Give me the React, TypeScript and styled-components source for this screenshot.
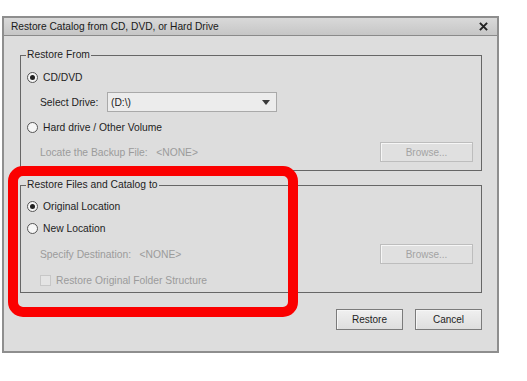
import React from 'react';
import styled, { createGlobalStyle } from 'styled-components';

const GlobalStyle = createGlobalStyle`
  html, body {
    margin: 0;
    padding: 0;
    background: #ffffff;
  }
  body {
    font-family: "Liberation Sans", Arial, sans-serif;
    font-size: 10.3px;
    color: #1e1e1e;
  }
`;

const Page = styled.div`
  position: relative;
  width: 527px;
  height: 381px;
  padding: 16px 0 0 2px;
  box-sizing: border-box;
`;

const Dialog = styled.div`
  width: 497px;
  height: 337px;
  box-sizing: border-box;
  border: 2px solid #8e8e8e;
  background: #dddddd;
  display: flex;
  flex-direction: column;
`;

const TitleBar = styled.div`
  height: 17px;
  display: flex;
  align-items: center;
  justify-content: space-between;
  padding: 0 9px 0 7px;
  background: linear-gradient(#d9d9d9, #c6c6c6);
  border-bottom: 1px solid #8a8a8a;
  font-size: 10.2px;
  color: #1a1a1a;
`;

const CloseIcon = styled.svg`
  width: 9px;
  height: 9px;
  display: block;
`;

const Body = styled.div`
  flex: 1;
  display: flex;
  flex-direction: column;
  padding: 12px 15px 0 16px;
`;

const Group = styled.fieldset<{ $top?: number; $compact?: boolean }>`
  margin: ${({ $top }) => $top || 0}px 0 0 0;
  padding: ${({ $compact }) => ($compact ? '3px 8px 1px 5px' : '4px 8px 7px 5px')};
  border: 1px solid #666666;
  min-width: 0;
  display: flex;
  flex-direction: column;
  gap: ${({ $compact }) => ($compact ? 0 : 3)}px;
`;

const Legend = styled.legend`
  padding: 0 1px;
  margin-left: 0;
  height: 14px;
  line-height: 14px;
  color: #1e1e1e;
`;

const Row = styled.div<{ $indent?: boolean; $gap?: number }>`
  height: 22px;
  display: flex;
  align-items: center;
  padding-left: ${({ $indent }) => ($indent ? 14 : 1)}px;
  margin-top: ${({ $gap }) => $gap || 0}px;
`;

const RadioDot = styled.span<{ $checked?: boolean }>`
  width: 9px;
  height: 9px;
  border-radius: 50%;
  border: 1px solid #555555;
  background: #f6f6f6;
  display: inline-flex;
  align-items: center;
  justify-content: center;
  margin-right: 5px;
  &::after {
    content: '';
    width: 5px;
    height: 5px;
    border-radius: 50%;
    background: ${({ $checked }) => ($checked ? '#222222' : 'transparent')};
  }
`;

const Check = styled.span`
  width: 9px;
  height: 9px;
  border: 1px solid #c7c7c7;
  background: #e4e4e4;
  margin-right: 5px;
`;

const Label = styled.span<{ $disabled?: boolean; $width?: number }>`
  color: ${({ $disabled }) => ($disabled ? '#9b9b9b' : '#1e1e1e')};
  white-space: pre;
  width: ${({ $width }) => ($width ? `${$width}px` : 'auto')};
`;

const Select = styled.div`
  width: 170px;
  height: 20px;
  box-sizing: border-box;
  border: 1px solid #a9a9a9;
  background: #ececec;
  display: flex;
  align-items: center;
  justify-content: space-between;
  padding: 0 6px 0 3px;
`;

const Caret = styled.span`
  width: 0;
  height: 0;
  border-left: 4px solid transparent;
  border-right: 4px solid transparent;
  border-top: 5px solid #3a3a3a;
`;

const Spacer = styled.div`
  flex: 1;
`;

const Button = styled.button<{ $disabled?: boolean; $width?: number }>`
  width: ${({ $width }) => $width || 93}px;
  height: ${({ $disabled }) => ($disabled ? 20 : 21)}px;
  box-sizing: border-box;
  padding: 0;
  font: inherit;
  font-size: 10px;
  border: 1px solid ${({ $disabled }) => ($disabled ? '#bdbdbd' : '#7b7b7b')};
  background: ${({ $disabled }) =>
    $disabled ? '#e0e0e0' : 'linear-gradient(#f0f0f0, #dedede)'};
  color: ${({ $disabled }) => ($disabled ? '#a3a3a3' : '#1e1e1e')};
  box-shadow: inset 1px 1px 0 #f6f6f6;
`;

const Footer = styled.div`
  display: flex;
  justify-content: flex-end;
  gap: 12px;
  margin-top: 16px;
`;

const Highlight = styled.div`
  position: absolute;
  left: 8px;
  top: 166px;
  width: 290px;
  height: 151px;
  box-sizing: border-box;
  border: 10px solid #fb0000;
  border-radius: 15px;
  pointer-events: none;
`;

export default function App() {
  return (
    <Page>
      <GlobalStyle />
      <Dialog>
        <TitleBar>
          <span>{'Restore Catalog from CD, DVD, or Hard Drive'}</span>
          <CloseIcon viewBox="0 0 10 10">
            <path d="M1 1 L9 9 M9 1 L1 9" stroke="#222" strokeWidth="2.2" />
          </CloseIcon>
        </TitleBar>
        <Body>
          <Group>
            <Legend>{'Restore From'}</Legend>
            <Row>
              <RadioDot $checked />
              <Label>{'CD/DVD'}</Label>
            </Row>
            <Row $indent>
              <Label $width={67}>{'Select Drive:'}</Label>
              <Select>
                <span>{'(D:\\)'}</span>
                <Caret />
              </Select>
            </Row>
            <Row>
              <RadioDot />
              <Label>{'Hard drive / Other Volume'}</Label>
            </Row>
            <Row $indent>
              <Label $disabled>{'Locate the Backup File:   <NONE>'}</Label>
              <Spacer />
              <Button $disabled>{'Browse...'}</Button>
            </Row>
          </Group>
          <Group $top={7} $compact>
            <Legend>{'Restore Files and Catalog to'}</Legend>
            <Row>
              <RadioDot $checked />
              <Label>{'Original Location'}</Label>
            </Row>
            <Row>
              <RadioDot />
              <Label>{'New Location'}</Label>
            </Row>
            <Row $indent $gap={4}>
              <Label $disabled>{'Specify Destination:   <NONE>'}</Label>
              <Spacer />
              <Button $disabled>{'Browse...'}</Button>
            </Row>
            <Row $indent $gap={4}>
              <Check />
              <Label $disabled>{'Restore Original Folder Structure'}</Label>
            </Row>
          </Group>
          <Footer>
            <Button $width={67}>{'Restore'}</Button>
            <Button $width={67}>{'Cancel'}</Button>
          </Footer>
        </Body>
      </Dialog>
      <Highlight />
    </Page>
  );
}
